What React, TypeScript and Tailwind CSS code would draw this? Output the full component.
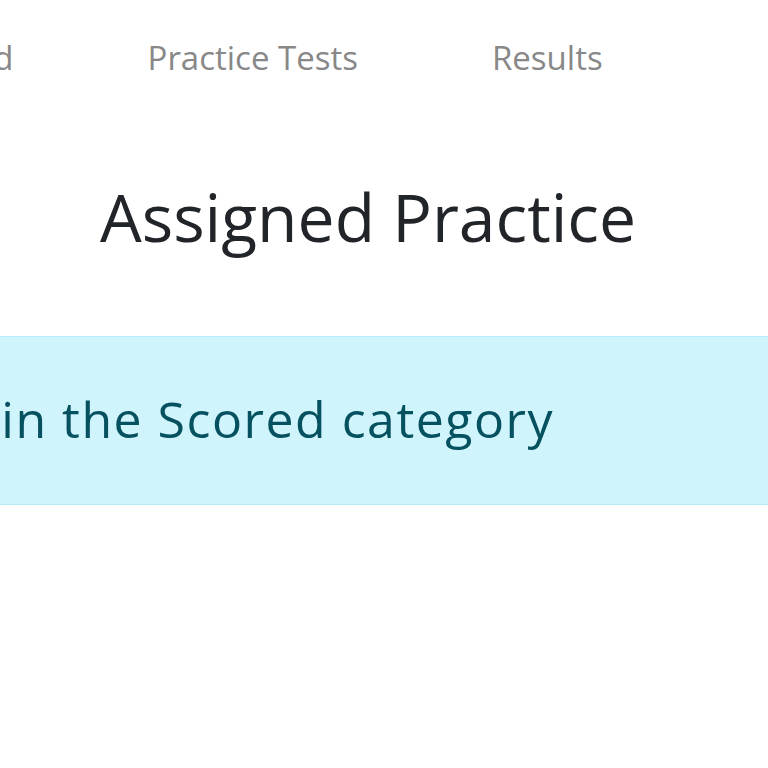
export default function App() {
  const navItems = ["Assigned", "Practice Tests", "Results"];

  return (
    <div
      className="w-full h-[768px] overflow-hidden bg-white"
      style={{ fontFamily: '"Open Sans", "Noto Sans", sans-serif' }}
    >
      {/* top nav */}
      <nav className="mt-[41px] flex whitespace-nowrap -ml-[124px] gap-[134px]">
        {navItems.map((item) => (
          <span key={item} className="text-[33px] leading-none text-[#888888]">
            {item}
          </span>
        ))}
      </nav>

      {/* heading */}
      <h1 className="mt-[109px] pr-[32px] text-center text-[66px] leading-none text-[#212529]">
        Assigned Practice
      </h1>

      {/* alert */}
      <div className="mt-[87px] w-full border-y border-[#b6effb] bg-[#cff4fc] pt-[57px] pb-[60px]">
        <div className="flex justify-end w-[554px] whitespace-nowrap">
          <p className="text-[50px] leading-none tracking-[1.5px] text-[#055160]">
            You have no assignments in the Scored category
          </p>
        </div>
      </div>
    </div>
  );
}
